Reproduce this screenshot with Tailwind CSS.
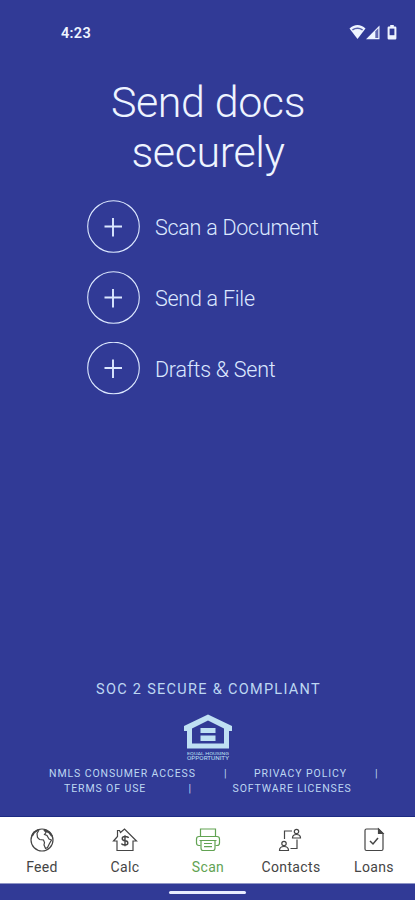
<!DOCTYPE html>
<html lang="en">
<head>
  <meta charset="UTF-8">
  <meta name="viewport" content="width=device-width, initial-scale=1.0">
  <title>Send docs securely</title>
  <!-- Tailwind CSS -->
  <script src="https://cdn.jsdelivr.net/npm/@tailwindcss/browser@4"></script>
</head>
<body class="bg-[#313a96] font-[Roboto,sans-serif]">
  <div class="w-[415px] h-[900px] flex flex-col overflow-hidden">
    <!-- Status bar -->
    <header class="h-[77px] shrink-0 flex items-start justify-between pl-[61px] pr-[18px] pt-6 text-[#eef4ff]">
      <span class="text-[14.5px] leading-[19px] font-semibold tracking-[0.3px]">4:23</span>
      <div class="flex items-start">
        <svg class="w-[17px] h-4" viewBox="0 0 17 16" fill="currentColor">
          <path d="M.5 4.6C5-.1 12-.1 16.500 4.600L8.500 15z"/>
          <path d="M3 5.200Q8.500 1.600 14 5.200L13.200 6.400Q8.500 3.600 3.800 6.400z" fill="#313a96" fill-opacity=".8"/>
        </svg>
        <svg class="w-[14px] h-4" viewBox="0 0 14 16" fill="currentColor">
          <path d="M0 15.300L13.500 1.500V15.300z"/>
          <path d="M9.300 7.200L12.300 4.200V14H9.300z" fill="#313a96" fill-opacity=".75"/>
        </svg>
        <svg class="w-[10px] h-4 ml-[7px]" viewBox="0 0 10 16" fill="currentColor">
          <path d="M3.200 1h3.600v1.500H8.200a1.200 1.200 0 0 1 1.200 1.200v10.600a1.200 1.200 0 0 1-1.200 1.200H1.800A1.200 1.200 0 0 1 .6 14.300V3.700a1.200 1.200 0 0 1 1.200-1.200h1.400z"/>
          <path d="M2.600 4.600h4.800v6.600H2.600z" fill="#313a96"/>
        </svg>
      </div>
    </header>

    <!-- Title -->
    <h1 class="h-[123px] shrink-0 pl-px text-center text-[43px] leading-[50px] tracking-[-0.4px] font-light text-[#eef4ff]">Send docs<br>securely</h1>

    <!-- Actions -->
    <ul class="flex flex-col gap-[18px] pl-[86.5px] text-[21.5px] tracking-[-0.25px] font-light text-[#dce8ff]">
      <li class="flex items-center gap-[15.5px]">
        <svg class="w-[53px] h-[53px]" viewBox="0 0 53 53" fill="none" stroke="currentColor">
          <circle cx="26.500" cy="26.500" r="25.800" stroke-width="1.100"/>
          <path d="M17.500 26.500H35M26 18v18.500" stroke-width="1.900"/>
        </svg>
        <span class="pt-1">Scan a Document</span>
      </li>
      <li class="flex items-center gap-[15.5px]">
        <svg class="w-[53px] h-[53px]" viewBox="0 0 53 53" fill="none" stroke="currentColor">
          <circle cx="26.500" cy="26.500" r="25.800" stroke-width="1.100"/>
          <path d="M17.500 26.500H35M26 18v18.500" stroke-width="1.900"/>
        </svg>
        <span class="pt-1">Send a File</span>
      </li>
      <li class="flex items-center gap-[15.5px]">
        <svg class="w-[53px] h-[53px]" viewBox="0 0 53 53" fill="none" stroke="currentColor">
          <circle cx="26.500" cy="26" r="25.800" stroke-width="1.100"/>
          <path d="M17.500 26H35M26 17.500V36" stroke-width="1.900"/>
        </svg>
        <span class="pt-1">Drafts &amp; Sent</span>
      </li>
    </ul>

    <!-- Legal -->
    <footer class="mt-auto h-[136px] shrink-0 flex flex-col text-[#bdd7f2]">
      <p class="pl-0.5 text-center text-[14.5px] leading-5 tracking-[1.3px]">SOC 2 SECURE &amp; COMPLIANT</p>
      <svg class="w-[50px] h-[50px] mt-3.5 ml-[183px] shrink-0" viewBox="0 0 50 50" fill="#bfe0f3">
        <path fill-rule="evenodd" d="M25 .5L49 12v5h-3v17.500H4V17H1v-5zM25 6.500L9 14.500V29.500H41V14.500z"/>
        <path d="M17.500 14h15v5h-15zM17.500 21.500h15v5.500h-15z"/>
        <text x="4" y="41" font-size="4.200" textLength="42" lengthAdjust="spacingAndGlyphs">EQUAL HOUSING</text>
        <text x="4" y="46" font-size="4.800" textLength="42" lengthAdjust="spacingAndGlyphs">OPPORTUNITY</text>
      </svg>
      <div class="flex mt-0.5 pl-[49px] text-[10.500px] leading-[15px] tracking-[0.900px]">
        <span class="w-[175px]">NMLS CONSUMER ACCESS</span>
        <span class="w-[30px]">|</span>
        <span class="w-[121px]">PRIVACY POLICY</span>
        <span>|</span>
      </div>
      <div class="flex pl-16 text-[10.500px] leading-[15px] tracking-[0.900px]">
        <span class="w-[124.5px]">TERMS OF USE</span>
        <span class="w-[44px]">|</span>
        <span>SOFTWARE LICENSES</span>
      </div>
    </footer>

    <!-- Tab bar -->
    <nav class="h-[68px] shrink-0 grid grid-cols-5 bg-white border-t border-b border-t-[#1c2a83] border-b-[#8f95c6] pt-2.5 text-[14px] leading-5 text-[#454545]">
      <a class="flex flex-col items-center gap-1 pl-px tracking-[0.350px]">
        <svg class="w-[26px] h-[26px]" viewBox="0 0 26 26" fill="none" stroke="currentColor" stroke-width="1.200">
          <circle cx="13" cy="13" r="11"/>
          <path d="M10 3L8 6.500 8.500 10.500 10.500 12.500 14.500 13 15.500 15.500 15 18 16.500 21.500 18.500 20.500 20.500 16.500 22.500 13 20 12 18 8.500 15.500 7.500 17 5.500 15 3"/>
          <path d="M3 9l2-3.500L9 3M15 2.800l5 2.500 3 4" stroke-width="1.900"/>
        </svg>
        Feed
      </a>
      <a class="flex flex-col items-center gap-1 pl-px tracking-[0.350px]">
        <svg class="w-[26px] h-[26px]" viewBox="0 0 26 26" fill="none" stroke="currentColor" stroke-width="1.200">
          <path d="M1.500 14L5.500 9.500V3.500H7.500L8.500 5.500 12.500 2 24.500 14H21V23.500H5V14z"/>
          <path d="M16.500 11Q16 9.500 13 9.500C9.300 9.500 9.300 13.500 13 13.800C16.800 14 16.800 18 13 18Q10 18 9.500 16.500M13 8.300v10.900" stroke-width="1.400"/>
        </svg>
        Calc
      </a>
      <a class="flex flex-col items-center gap-1 pl-px tracking-[0.350px] text-[#62a353]">
        <svg class="w-[26px] h-[26px]" viewBox="0 0 26 26" fill="none" stroke="currentColor" stroke-width="1.200">
          <path d="M5.500 9.500V2H20.500V9.500M5.500 18.500H4Q1.500 18.500 1.500 16V12Q1.500 9.500 4 9.500H22Q24.500 9.500 24.500 12V16Q24.500 18.500 22 18.500H20.500"/>
          <path d="M4.500 13.500H21.500M6 13.500V21Q6 23.500 8 23.500H18Q20 23.500 20 21V13.500M9 16.500H17M9 19.700H17"/>
        </svg>
        Scan
      </a>
      <a class="flex flex-col items-center gap-1 pl-px tracking-[0.350px]">
        <svg class="w-[26px] h-[26px]" viewBox="0 0 26 26" fill="none" stroke="currentColor" stroke-width="1.200">
          <path d="M6.500 12V4H14M19 12.500V21.500H12.500"/>
          <circle cx="18.500" cy="4.500" r="2.200"/>
          <path d="M14.500 11Q14.500 7.500 18.500 7.500T22.500 11z"/>
          <circle cx="6" cy="16.500" r="2.200"/>
          <path d="M1.500 23.500Q1.500 19.500 6 19.500T10.500 23.500z"/>
        </svg>
        Contacts
      </a>
      <a class="flex flex-col items-center gap-1 pl-px tracking-[0.350px]">
        <svg class="w-[26px] h-[26px]" viewBox="0 0 26 26" fill="none" stroke="currentColor" stroke-width="1.200">
          <path d="M5.500 2H17.500L22 6.500V22Q22 23.500 20.500 23.500H5.500Q4 23.500 4 22V3.500Q4 2 5.500 2z"/>
          <path d="M17.500 2V6.500H22z" fill="currentColor"/>
          <path d="M9 14l3 3 5-6" stroke-width="1.500"/>
        </svg>
        Loans
      </a>
    </nav>

    <!-- Gesture bar -->
    <div class="h-4 shrink-0 flex justify-center pt-[7px]">
      <div class="w-[77px] h-[2.500px] rounded-full bg-[#e8edff]"></div>
    </div>
  </div>
</body>
</html>
